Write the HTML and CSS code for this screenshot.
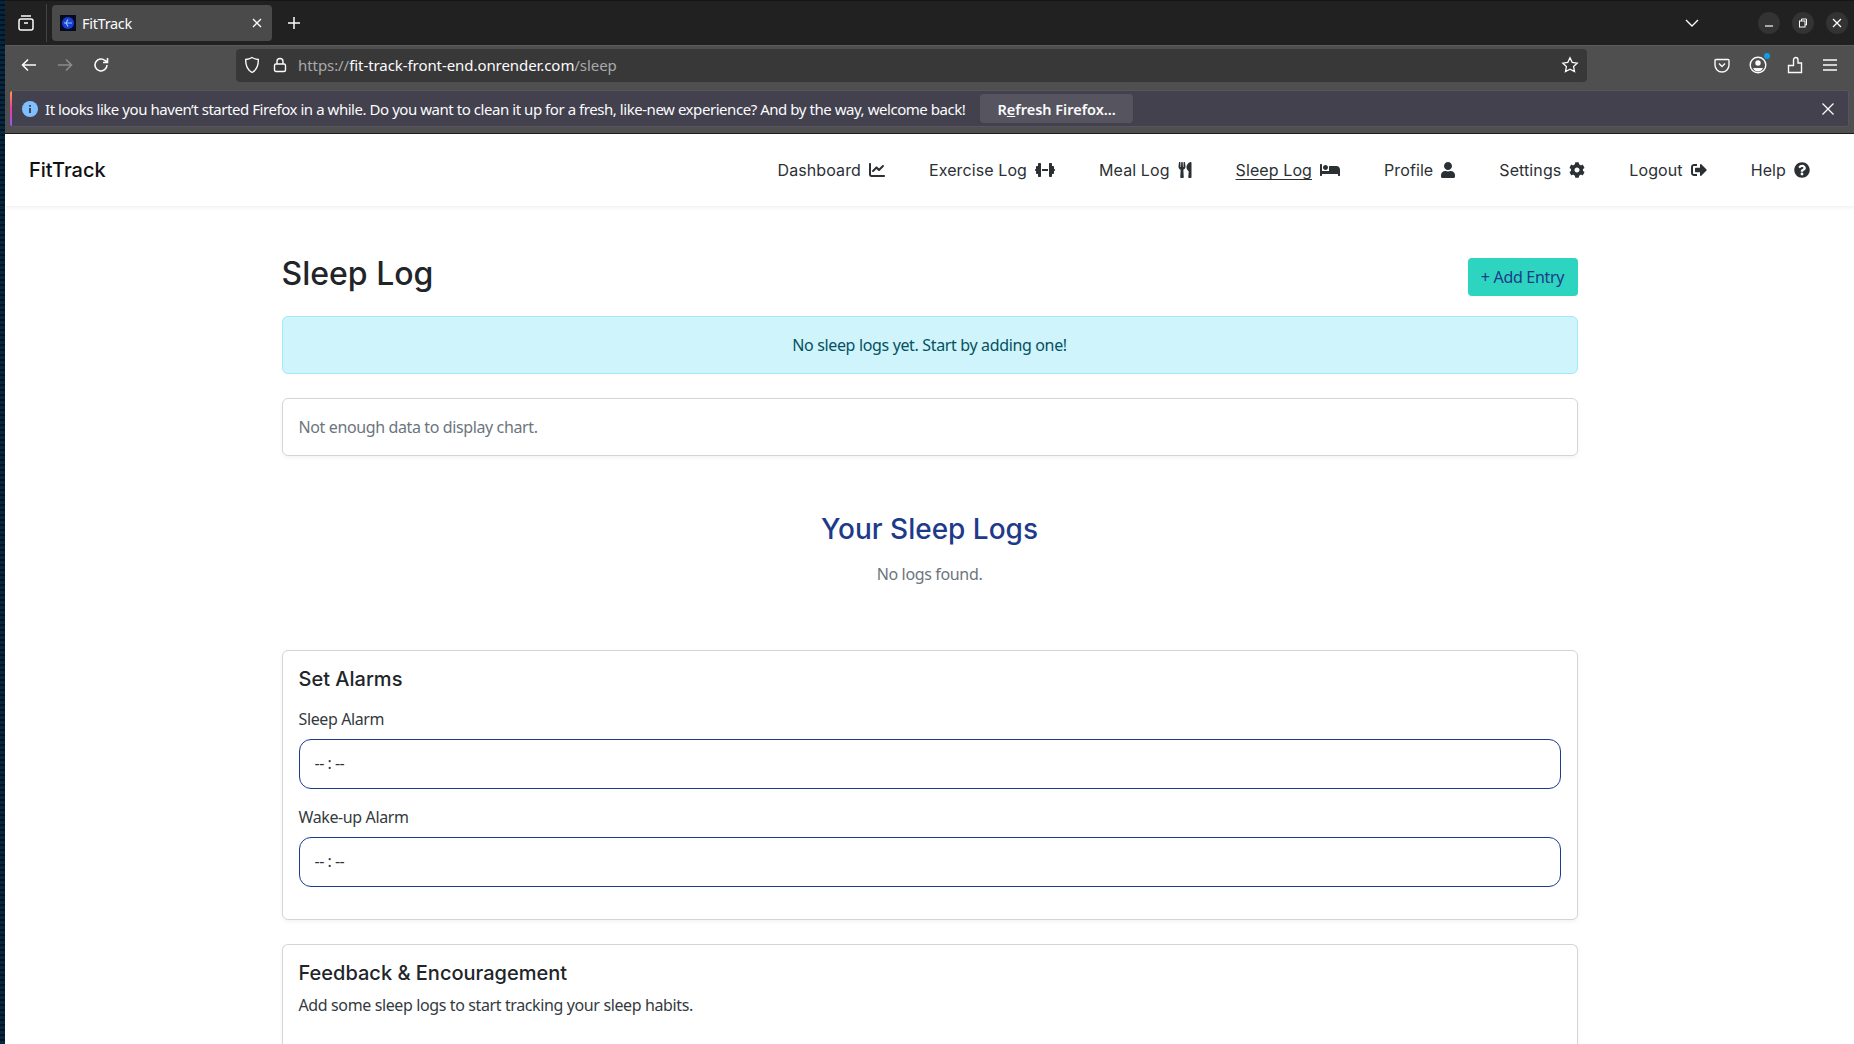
FILE: index.html
```html
<!DOCTYPE html>
<html lang="en">
<head>
  <meta charset="utf-8">
  <title>FitTrack</title>
  <link rel="stylesheet" href="styles.css">
</head>
<body>
  <div class="wallpaper"></div>
  <div class="window">
    <div class="tabbar">
      <button class="chrome-btn sidebar-btn">
        <svg width="18" height="18" viewBox="0 0 18 18" fill="none" stroke="#fbfbfe" stroke-width="1.5"><rect x="2" y="5" width="14" height="11" rx="2"/><path d="M4 2h10M7 9h4"/></svg>
      </button>
      <div class="tab-sep"></div>
      <div class="tab">
        <svg class="favicon" width="16" height="16" viewBox="0 0 16 16"><rect width="16" height="16" fill="#050a24"/><circle cx="8" cy="8" r="6" fill="#1a3fd0"/><path d="M4 8h8M8 4.5 6 8l2 3.5" stroke="#8fc4ff" stroke-width="1.2" fill="none"/></svg>
        <span class="tab-title">FitTrack</span>
        <svg width="12" height="12" viewBox="0 0 12 12" stroke="#fbfbfe" stroke-width="1.4"><path d="M2 2l8 8M10 2l-8 8"/></svg>
      </div>
      <button class="chrome-btn new-tab">
        <svg width="14" height="14" viewBox="0 0 14 14" stroke="#fbfbfe" stroke-width="1.5"><path d="M7 1v12M1 7h12"/></svg>
      </button>
      <div class="spacer"></div>
      <svg class="tabs-menu" width="14" height="14" viewBox="0 0 14 14" fill="none" stroke="#fbfbfe" stroke-width="1.4"><path d="M1 4l6 6 6-6"/></svg>
      <div class="win-controls">
        <span class="win-btn"><svg width="10" height="10" viewBox="0 0 10 10" stroke="#fbfbfe" stroke-width="1.2"><path d="M1 8h8"/></svg></span>
        <span class="win-btn"><svg width="10" height="10" viewBox="0 0 10 10" fill="none" stroke="#fbfbfe"><rect x="1.5" y="3" width="5.5" height="6"/><path d="M3.5 3V1h5v6H7"/></svg></span>
        <span class="win-btn"><svg width="10" height="10" viewBox="0 0 10 10" stroke="#fbfbfe" stroke-width="1.3"><path d="M1 1l8 8M9 1l-8 8"/></svg></span>
      </div>
    </div>

    <div class="toolbar">
      <svg class="tool-icon back" width="18" height="18" viewBox="0 0 18 18" fill="none" stroke="#fbfbfe" stroke-width="1.6"><path d="M16 9H3M8 3.5 2.5 9 8 14.5"/></svg>
      <svg class="tool-icon forward" width="18" height="18" viewBox="0 0 18 18" fill="none" stroke="#8c8c8e" stroke-width="1.6"><path d="M2 9h13M10 3.5 15.5 9 10 14.5"/></svg>
      <svg class="tool-icon reload" width="18" height="18" viewBox="0 0 18 18" fill="none" stroke="#fbfbfe" stroke-width="1.6"><path d="M15 9a6 6 0 1 1-2-4.5L15 6M15.5 2v4.5H11"/></svg>
      <div class="urlbar">
        <svg class="shield" width="16" height="18" viewBox="0 0 16 18" fill="none" stroke="#fbfbfe" stroke-width="1.4"><path d="M8 1.5c2 1.2 4 1.8 6.3 2 .2 6-1.600 10.500-6.300 13-4.700-2.500-6.500-7-6.300-13 2.300-.2 4.300-.8 6.300-2z"/></svg>
        <svg class="lock" width="14" height="16" viewBox="0 0 14 16" fill="none" stroke="#fbfbfe" stroke-width="1.4"><rect x="1.500" y="7" width="11" height="7.500" rx="1.500"/><path d="M4 7V4.500a3 3 0 0 1 6 0V7"/></svg>
        <span class="url"><span class="url-dim">https://</span>fit-track-front-end.onrender.com<span class="url-dim">/sleep</span></span>
        <span class="spacer"></span>
        <svg width="18" height="18" viewBox="0 0 18 18" fill="none" stroke="#fbfbfe" stroke-width="1.3"><path d="M9 1.800l2.200 4.600 5 .7-3.600 3.500.9 5L9 13.200l-4.500 2.400.9-5L1.800 7.100l5-.7z"/></svg>
      </div>
      <div class="tool-right">
        <svg width="16" height="16" viewBox="0 0 16 16" fill="none" stroke="#fbfbfe" stroke-width="1.4"><path d="M2 2.500h12c.5 0 1 .4 1 1V8a7 7 0 0 1-14 0V3.500c0-.6.500-1 1-1z"/><path d="M5 6.500 8 9.500l3-3"/></svg>
        <span class="account">
          <svg width="18" height="18" viewBox="0 0 18 18"><circle cx="9" cy="9" r="7.800" fill="none" stroke="#fbfbfe" stroke-width="1.400"/><circle cx="9" cy="7" r="2.700" fill="#fbfbfe"/><path d="M4 12h10c-1 2.500-3 3.500-5 3.500s-4-1-5-3.500z" fill="#fbfbfe"/></svg>
          <span class="account-dot"></span>
        </span>
        <svg width="16" height="18" viewBox="0 0 16 18" fill="none" stroke="#fbfbfe" stroke-width="1.400"><path d="M1.500 16.500V9.500h5V4c0-3.300 4.500-3.300 4.500 0v3H14.500v9.500z"/></svg>
        <svg width="16" height="14" viewBox="0 0 16 14" stroke="#fbfbfe" stroke-width="1.400"><path d="M1 2h14M1 7h14M1 12h14"/></svg>
      </div>
    </div>

    <div class="notice-wrap">
      <div class="notice">
        <svg class="notice-icon" width="16" height="16" viewBox="0 0 16 16"><circle cx="8" cy="8" r="8" fill="#80bfff"/><rect x="7.200" y="7" width="1.600" height="5" fill="#2b2a33"/><rect x="7.200" y="4" width="1.600" height="1.700" fill="#2b2a33"/></svg>
        <span class="notice-text">It looks like you haven’t started Firefox in a while. Do you want to clean it up for a fresh, like-new experience? And by the way, welcome back!</span>
        <span class="notice-btn">R<u>e</u>fresh Firefox…</span>
        <span class="spacer"></span>
        <svg class="notice-close" width="14" height="14" viewBox="0 0 14 14" stroke="#fbfbfe" stroke-width="1.300"><path d="M1.500 1.500l11 11M12.500 1.500l-11 11"/></svg>
      </div>
    </div>

    <div class="page">
      <nav class="navbar">
        <a class="brand">FitTrack</a>
        <ul class="nav-links">
          <li><a>Dashboard</a><svg class="nav-icon" viewBox="0 0 512 512"><path d="M64 64c0-17.700-14.300-32-32-32S0 46.300 0 64V400c0 44.200 35.800 80 80 80H480c17.700 0 32-14.300 32-32s-14.300-32-32-32H80c-8.800 0-16-7.200-16-16V64zm406.600 86.600c12.500-12.500 12.500-32.800 0-45.300s-32.800-12.500-45.300 0L320 210.700l-57.400-57.400c-12.500-12.500-32.800-12.500-45.300 0l-112 112c-12.500 12.500-12.500 32.800 0 45.300s32.800 12.500 45.300 0L240 221.300l57.400 57.400c12.500 12.500 32.800 12.500 45.300 0l128-128z"/></svg></li>
          <li><a>Exercise Log</a><svg class="nav-icon wide" viewBox="0 0 640 512"><path d="M96 64c0-17.700 14.300-32 32-32h32c17.700 0 32 14.300 32 32V224v64V448c0 17.700-14.300 32-32 32H128c-17.700 0-32-14.300-32-32V384H64c-17.700 0-32-14.300-32-32V288c-17.700 0-32-14.300-32-32s14.300-32 32-32V160c0-17.700 14.300-32 32-32H96V64zm448 0v64h32c17.700 0 32 14.300 32 32v64c17.700 0 32 14.300 32 32s-14.300 32-32 32v64c0 17.700-14.300 32-32 32H544v64c0 17.700-14.300 32-32 32H480c-17.700 0-32-14.300-32-32V288 224 64c0-17.700 14.300-32 32-32h32c17.700 0 32 14.300 32 32zM416 224v64H224V224H416z"/></svg></li>
          <li><a>Meal Log</a><svg class="nav-icon narrow" viewBox="0 0 416 512"><path d="M207.900 15.200c.8 4.700 16.100 94.500 16.100 128.800 0 52.300-27.800 89.600-68.900 104.600L168 486.700c.7 13.700-10.200 25.300-24 25.300H80c-13.700 0-24.700-11.500-24-25.300l12.900-238.100C27.700 233.600 0 196.200 0 144 0 109.600 15.300 19.900 16.100 15.200 19.300-5.100 61.400-5.400 64 16.300v141.200c1.300 3.400 15.100 3.200 16 0 1.400-25.300 7.900-139.200 8-141.800 3.300-20.800 44.700-20.800 47.900 0 .2 2.700 6.600 116.500 8 141.800.9 3.200 14.800 3.400 16 0V16.300c2.600-21.600 44.800-21.400 48-1.100zm119.200 285.700l-15 185.100c-1.200 14 9.900 26 23.900 26h56c13.300 0 24-10.700 24-24V24c0-13.200-10.700-24-24-24-82.500 0-221.400 178.500-64.900 300.900z"/></svg></li>
          <li><a class="current">Sleep Log</a><svg class="nav-icon wide" viewBox="0 0 640 512"><path d="M176 256c44.110 0 80-35.890 80-80s-35.890-80-80-80-80 35.890-80 80 35.890 80 80 80zm352-128H304c-8.840 0-16 7.160-16 16v144H64V80c0-8.840-7.160-16-16-16H16C7.160 64 0 71.160 0 80v352c0 8.840 7.160 16 16 16h32c8.840 0 16-7.160 16-16v-48h512v48c0 8.840 7.160 16 16 16h32c8.840 0 16-7.160 16-16V240c0-61.860-50.140-112-112-112z"/></svg></li>
          <li><a>Profile</a><svg class="nav-icon narrow" viewBox="0 0 448 512"><path d="M224 256c70.700 0 128-57.300 128-128S294.700 0 224 0 96 57.300 96 128s57.300 128 128 128zm89.600 32h-16.700c-22.200 10.200-46.900 16-72.900 16s-50.600-5.800-72.900-16h-16.700C60.200 288 0 348.200 0 422.400V464c0 26.500 21.500 48 48 48h352c26.500 0 48-21.500 48-48v-41.600c0-74.200-60.200-134.400-134.400-134.400z"/></svg></li>
          <li><a>Settings</a><svg class="nav-icon" viewBox="0 0 512 512"><path d="M487.400 315.700l-42.600-24.600c4.300-23.200 4.300-47 0-70.200l42.600-24.600c4.900-2.800 7.100-8.600 5.500-14-11.100-35.600-30-67.800-54.700-94.600-3.800-4.100-10-5.100-14.800-2.300L380.800 110c-17.900-15.400-38.500-27.300-60.800-35.100V25.800c0-5.600-3.900-10.500-9.400-11.700-36.700-8.200-74.300-7.800-109.200 0-5.500 1.200-9.400 6.100-9.400 11.700V75c-22.200 7.900-42.800 19.800-60.800 35.100L88.700 85.500c-4.900-2.800-11-1.900-14.800 2.300-24.700 26.700-43.600 58.900-54.700 94.600-1.700 5.400.6 11.200 5.500 14L67.300 221c-4.300 23.200-4.300 47 0 70.200l-42.600 24.600c-4.900 2.800-7.100 8.600-5.500 14 11.100 35.600 30 67.800 54.700 94.600 3.800 4.100 10 5.100 14.800 2.300l42.600-24.600c17.900 15.400 38.500 27.300 60.800 35.100v49.200c0 5.600 3.900 10.500 9.400 11.700 36.700 8.200 74.300 7.800 109.200 0 5.500-1.200 9.400-6.100 9.400-11.700v-49.200c22.200-7.900 42.800-19.800 60.800-35.100l42.600 24.600c4.900 2.800 11 1.900 14.800-2.300 24.700-26.700 43.600-58.900 54.700-94.600 1.500-5.500-.7-11.300-5.600-14.100zM256 336c-44.100 0-80-35.900-80-80s35.900-80 80-80 80 35.900 80 80-35.900 80-80 80z"/></svg></li>
          <li><a>Logout</a><svg class="nav-icon" viewBox="0 0 512 512"><path d="M497 273L329 441c-15 15-41 4.500-41-17v-96H152c-13.300 0-24-10.700-24-24v-96c0-13.300 10.700-24 24-24h136V88c0-21.400 25.900-32 41-17l168 168c9.300 9.400 9.300 24.600 0 34zM192 436v-40c0-6.600-5.400-12-12-12H96c-17.700 0-32-14.300-32-32V160c0-17.700 14.300-32 32-32h84c6.600 0 12-5.400 12-12V76c0-6.600-5.400-12-12-12H96c-53 0-96 43-96 96v192c0 53 43 96 96 96h84c6.600 0 12-5.400 12-12z"/></svg></li>
          <li><a>Help</a><svg class="nav-icon" viewBox="0 0 512 512"><path d="M504 256c0 136.997-111.043 248-248 248S8 392.997 8 256C8 119.083 119.043 8 256 8s248 111.083 248 248zM262.655 90c-54.497 0-89.255 22.957-116.549 63.758-3.536 5.286-2.353 12.415 2.715 16.258l34.699 26.310c5.205 3.947 12.621 3.008 16.665-2.122 17.864-22.658 30.113-35.797 57.303-35.797 20.429 0 45.698 13.148 45.698 32.958 0 14.976-12.363 22.667-32.534 33.976C247.128 238.528 216 254.941 216 296v4c0 6.627 5.373 12 12 12h56c6.627 0 12-5.373 12-12v-1.333c0-28.462 83.186-29.647 83.186-106.667 0-58.002-60.165-102-116.531-102zM256 338c-25.365 0-46 20.635-46 46 0 25.364 20.635 46 46 46s46-20.636 46-46c0-25.365-20.635-46-46-46z"/></svg></li>
        </ul>
      </nav>

      <main class="container">
        <div class="title-row">
          <h1>Sleep Log</h1>
          <button class="add-btn">+ Add Entry</button>
        </div>
        <div class="alert">No sleep logs yet. Start by adding one!</div>
        <div class="card chart-card">Not enough data to display chart.</div>
        <h2 class="logs-title">Your Sleep Logs</h2>
        <p class="no-logs">No logs found.</p>
        <section class="card alarms">
          <h3>Set Alarms</h3>
          <label for="sleep-alarm">Sleep Alarm</label>
          <input id="sleep-alarm" class="time-input" type="text" value="-- : --">
          <label for="wake-alarm">Wake-up Alarm</label>
          <input id="wake-alarm" class="time-input" type="text" value="-- : --">
        </section>
        <section class="card feedback">
          <h3>Feedback &amp; Encouragement</h3>
          <p>Add some sleep logs to start tracking your sleep habits.</p>
        </section>
      </main>
    </div>
  </div>
</body>
</html>
```

FILE: styles.css
```css
* {
  box-sizing: border-box;
}
html, body {
  height: 100%;
}
body {
  display: flex;
  margin: 0;
  overflow: hidden;
  background: #04182b;
  font-family: "Noto Sans", sans-serif;
}
button {
  border: 0;
  padding: 0;
  background: none;
  font-family: inherit;
}
svg {
  display: block;
  flex: none;
}
.spacer {
  flex: 1;
}
.wallpaper {
  width: 5px;
  flex: none;
  background: repeating-linear-gradient(0deg, #04263f 0 3px, #021220 3px 5px);
}
.window {
  flex: 1;
  min-width: 0;
  display: flex;
  flex-direction: column;
}

/* browser chrome */
.tabbar {
  height: 45px;
  display: flex;
  align-items: center;
  flex: none;
  background: #212121;
  border-top: 1px solid #161616;
}
.chrome-btn {
  display: flex;
  align-items: center;
  justify-content: center;
}
.sidebar-btn {
  width: 41px;
}
.tab-sep {
  width: 1px;
  height: 38px;
  background: #444;
  margin-right: 5px;
}
.tab {
  width: 220px;
  height: 36px;
  display: flex;
  align-items: center;
  gap: 6px;
  padding: 0 9px 0 8px;
  background: #4a4a4a;
  border-radius: 4px;
  color: #fbfbfe;
  font-size: 14.5px;
}
.tab-title {
  flex: 1;
  letter-spacing: -0.3px;
}
.new-tab {
  margin-left: 15px;
}
.tabs-menu {
  margin-right: 59px;
}
.win-controls {
  display: flex;
  gap: 12px;
  margin-right: 6px;
}
.win-btn {
  width: 22px;
  height: 22px;
  display: flex;
  align-items: center;
  justify-content: center;
  border-radius: 50%;
  background: #333;
}
.toolbar {
  height: 39px;
  flex: none;
  display: flex;
  align-items: center;
  background: #4f4f4f;
  border-top: 1px solid #5a5a5a;
}
.tool-icon.back {
  margin-left: 15px;
}
.tool-icon.forward {
  margin-left: 18px;
}
.tool-icon.reload {
  margin-left: 18px;
}
.urlbar {
  width: 1351px;
  height: 33px;
  margin-left: 126px;
  display: flex;
  align-items: center;
  padding: 0 8px 0 8px;
  background: #383838;
  border-radius: 4px;
}
.lock {
  margin-left: 13px;
}
.url {
  margin-left: 11px;
  color: #fbfbfe;
  font-size: 15px;
  letter-spacing: -0.07px;
}
.url-dim {
  color: #a9a9ab;
}
.tool-right {
  flex: 1;
  display: flex;
  align-items: center;
  justify-content: space-between;
  padding: 0 16px 0 127px;
}
.account {
  position: relative;
}
.account-dot {
  position: absolute;
  top: -3px;
  right: -3px;
  width: 6px;
  height: 6px;
  border-radius: 50%;
  background: #0a9fe8;
}
.notice-wrap {
  height: 50px;
  flex: none;
  padding: 6px 5px 0;
  background: #4f4f4f;
  border-bottom: 1px solid #1c1b22;
}
.notice {
  height: 37px;
  display: flex;
  align-items: center;
  padding: 0 12px 0 12px;
  background: linear-gradient(#ff9d3a, #f0399a, #9059ff) left / 2px 100% no-repeat #42414d;
  border: 1px solid #55545f;
  border-left: 0;
  border-radius: 3px;
  color: #fbfbfe;
  font-size: 15px;
}
.notice-icon {
  margin-right: 7px;
}
.notice-text {
  letter-spacing: -0.45px;
  white-space: nowrap;
}
.notice-btn {
  height: 29px;
  margin-left: 15px;
  padding: 0 17px;
  display: flex;
  align-items: center;
  white-space: pre;
  background: #55545f;
  border-radius: 4px;
  font-weight: 600;
  font-size: 14.5px;
}
.notice-close {
  margin-right: 1px;
}

/* the page itself */
.page {
  flex: 1;
  min-height: 0;
  background: #fff;
}
.navbar {
  height: 72px;
  display: flex;
  align-items: center;
  justify-content: space-between;
  padding: 0 44px 0 24px;
  box-shadow: 0 2px 4px rgba(0, 0, 0, 0.06);
  font-family: Inter, sans-serif;
}
.brand {
  color: #111;
  font-size: 20px;
  font-weight: 500;
}
.nav-links {
  display: flex;
  gap: 44px;
  margin: 0;
  padding: 0;
  list-style: none;
  font-size: 16px;
  letter-spacing: 0.1px;
  color: #2b3035;
}
.nav-links li {
  display: flex;
  align-items: center;
  gap: 8px;
}
.current {
  text-decoration: underline;
  text-underline-offset: 3px;
}
.nav-icon {
  width: 16px;
  height: 16px;
  fill: #2b3035;
}
.nav-icon.wide {
  width: 20px;
}
.nav-icon.narrow {
  width: 14px;
}
.container {
  width: 1296px;
  margin: 0 auto;
  padding-top: 52px;
  color: #212529;
}
.title-row {
  display: flex;
  align-items: flex-start;
  justify-content: space-between;
  margin-bottom: 20px;
}
h1 {
  margin: 0;
  font-family: Inter, sans-serif;
  font-size: 32px;
  font-weight: 500;
  line-height: 32px;
}
.add-btn {
  height: 38px;
  width: 110px;
  background: #2dd4bf;
  border-radius: 4px;
  color: #1e3a8a;
  font-size: 16px;
  letter-spacing: -0.3px;
}
.alert {
  height: 58px;
  display: flex;
  align-items: center;
  justify-content: center;
  margin-bottom: 24px;
  background: #cff4fc;
  border: 1px solid #9eeaf9;
  border-radius: 6px;
  color: #055160;
  letter-spacing: -0.35px;
}
.card {
  background: #fff;
  border: 1px solid #d5d5d5;
  border-radius: 6px;
  box-shadow: 0 2px 4px rgba(0, 0, 0, 0.05);
  padding: 16px;
  letter-spacing: -0.38px;
}
.chart-card {
  height: 58px;
  padding-top: 17px;
  color: #6c757d;
}
.logs-title {
  margin: 56px 0 0;
  text-align: center;
  font-family: Inter, sans-serif;
  font-size: 28px;
  font-weight: 500;
  line-height: 34px;
  color: #1e3a8a;
}
.no-logs {
  margin: 16px 0 0;
  text-align: center;
  color: #6c757d;
  letter-spacing: -0.35px;
  line-height: 24px;
}
h3 {
  margin: 0;
  font-family: Inter, sans-serif;
  font-size: 20px;
  font-weight: 500;
  line-height: 24px;
  letter-spacing: 0;
}
.alarms {
  height: 270px;
  margin-top: 64px;
}
.alarms label {
  display: block;
  margin: 8px 0 8px;
  line-height: 24px;
  color: #343a40;
}
.alarms h3 + label {
  margin-top: 16px;
}
.time-input {
  display: block;
  width: 100%;
  height: 50px;
  padding: 0 15px 2px;
  border: 1.5px solid #1e3a8a;
  border-radius: 12px;
  background: #fff;
  font-family: inherit;
  font-size: 16px;
  letter-spacing: -0.5px;
  color: #333;
}
.time-input + label {
  margin-top: 16px;
}
.feedback {
  margin-top: 24px;
  height: 200px;
  border-bottom: 0;
}
.feedback p {
  margin: 8px 0 0;
  line-height: 24px;
  color: #343a40;
}
```
